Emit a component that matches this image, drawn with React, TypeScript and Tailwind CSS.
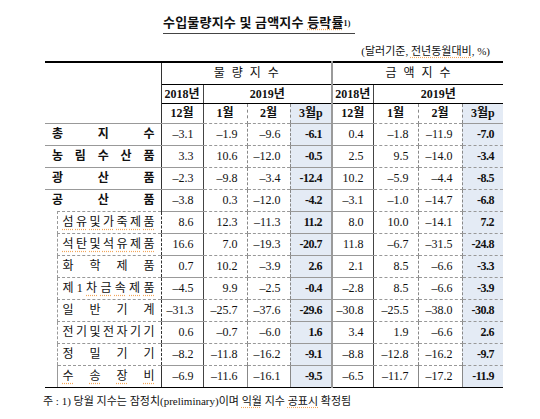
import React from "react";

const FONT = "'Liberation Serif', 'Noto Sans CJK KR', serif";

type Row = { label: string; top: boolean; vals: string[] };

const rows: Row[] = [
  { label: "총지수", top: true, vals: ["-3.1", "-1.9", "-9.6", "-6.1", "0.4", "-1.8", "-11.9", "-7.0"] },
  { label: "농림수산품", top: true, vals: ["3.3", "10.6", "-12.0", "-0.5", "2.5", "9.5", "-14.0", "-3.4"] },
  { label: "광산품", top: true, vals: ["-2.3", "-9.8", "-3.4", "-12.4", "10.2", "-5.9", "-4.4", "-8.5"] },
  { label: "공산품", top: true, vals: ["-3.8", "0.3", "-12.0", "-4.2", "-3.1", "-1.0", "-14.7", "-6.8"] },
  { label: "섬유및가죽제품", top: false, vals: ["8.6", "12.3", "-11.3", "11.2", "8.0", "10.0", "-14.1", "7.2"] },
  { label: "석탄및석유제품", top: false, vals: ["16.6", "7.0", "-19.3", "-20.7", "11.8", "-6.7", "-31.5", "-24.8"] },
  { label: "화학제품", top: false, vals: ["0.7", "10.2", "-3.9", "2.6", "2.1", "8.5", "-6.6", "-3.3"] },
  { label: "제1차금속제품", top: false, vals: ["-4.5", "9.9", "-2.5", "-0.4", "-2.8", "8.5", "-6.6", "-3.9"] },
  { label: "일반기계", top: false, vals: ["-31.3", "-25.7", "-37.6", "-29.6", "-30.8", "-25.5", "-38.0", "-30.8"] },
  { label: "전기및전자기기", top: false, vals: ["0.6", "-0.7", "-6.0", "1.6", "3.4", "1.9", "-6.6", "2.6"] },
  { label: "정밀기기", top: false, vals: ["-8.2", "-11.8", "-16.2", "-9.1", "-8.8", "-12.8", "-16.2", "-9.7"] },
  { label: "수송장비", top: false, vals: ["-6.9", "-11.6", "-16.1", "-9.5", "-6.5", "-11.7", "-17.2", "-11.9"] },
];

const squiggle = new Set(["섬유및가죽제품", "석탄및석유제품", "수송장비"]);

function Spread({ text, bold, under }: { text: string; bold: boolean; under?: boolean }) {
  const chars = Array.from(text);
  return (
    <div
      className={`flex justify-between items-center ${bold ? "font-bold" : "font-normal"} ${
        under ? "underline decoration-dotted decoration-[#f2a65a] underline-offset-[3px]" : ""
      }`}
    >
      {chars.map((c, i) => (
        <span key={i}>{c}</span>
      ))}
    </div>
  );
}

const vr = [
  "border-r border-r-[#444] border-solid",
  "border-r border-r-[#888] border-dashed",
  "border-r border-r-[#888] border-dashed",
  "border-r-[2px] border-r-[#9a9a9a] border-solid",
  "border-r border-r-[#444] border-solid",
  "border-r border-r-[#888] border-dashed",
  "border-r border-r-[#888] border-dashed",
  "",
];

export default function App() {
  return (
    <div
      className="w-[540px] h-[419px] bg-white text-[#111] overflow-hidden"
      style={{ fontFamily: FONT }}
    >
      <div className="pt-[10px] pl-[163px]">
        <span className="inline-block border-b border-[#444] pb-[2px] pr-[4px] text-[13px] leading-[17px] font-bold tracking-[0.2px]">
          수입물량지수 및 금액지수{" "}
          <span className="underline decoration-dotted decoration-[#f2a65a] underline-offset-[2px]">등락률</span>
          <sup className="text-[8px] font-bold relative -top-[1px]">1)</sup>
        </span>
      </div>
      <div className="mt-[10px] h-[14px] flex justify-end pr-[50px] text-[11px] leading-[14px]">
        <span>
          (달러기준,{" "}
          <span className="underline decoration-dotted decoration-[#f2a65a] underline-offset-[2px]">전년동월대비</span>, %)
        </span>
      </div>
      <table className="ml-[45px] mt-[3px] w-[458px] table-fixed border-collapse text-[12px]">
        <colgroup>
          <col className="w-[12px]" />
          <col className="w-[104px]" />
          <col className="w-[42px]" />
          <col className="w-[44px]" />
          <col className="w-[43px]" />
          <col className="w-[42px]" />
          <col className="w-[41px]" />
          <col className="w-[45px]" />
          <col className="w-[44px]" />
          <col className="w-[41px]" />
        </colgroup>
        <thead>
          <tr className="h-[22px]">
            <th
              colSpan={2}
              rowSpan={3}
              className="border-t-[2px] border-t-black border-r border-r-[#333] border-b border-b-[#999]"
            ></th>
            <th
              colSpan={4}
              className="border-t-[2px] border-t-black border-b border-b-black border-r-[2px] border-r-[#9a9a9a] font-normal text-[12px] tracking-[7px] pl-[7px]"
            >
              물량지수
            </th>
            <th
              colSpan={4}
              className="border-t-[2px] border-t-black border-b border-b-black font-normal text-[12px] tracking-[7px] pl-[7px]"
            >
              금액지수
            </th>
          </tr>
          <tr className="h-[19px] text-[12px]">
            <th className="border-b border-b-black border-r border-r-[#444] font-bold">2018년</th>
            <th colSpan={3} className="border-b border-b-black border-r-[2px] border-r-[#9a9a9a] font-bold">
              2019년
            </th>
            <th className="border-b border-b-black border-r border-r-[#444] font-bold">2018년</th>
            <th colSpan={3} className="border-b border-b-black font-bold">
              2019년
            </th>
          </tr>
          <tr className="h-[20px]">
            {["12월", "1월", "2월", "3월p", "12월", "1월", "2월", "3월p"].map((t, i) => (
              <th
                key={i}
                className={`border-b border-b-[#999] font-bold ${vr[i]} ${
                  i === 3 || i === 7 ? "bg-[#e4ebf5]" : ""
                }`}
              >
                {t}
              </th>
            ))}
          </tr>
        </thead>
        <tbody>
          {rows.map((r, ri) => {
            const last = ri === rows.length - 1;
            const bottom = last ? "border-b-[1.5px] border-b-black border-solid" : "border-b border-b-[#999] border-dashed";
            return (
              <tr key={ri} className="h-[22px]">
                {r.top ? (
                  <td
                    colSpan={2}
                    className={`${ri === 3 ? "" : bottom} border-r border-r-[#333] border-solid pl-[7px] pr-[6px]`}
                  >
                    <Spread text={r.label} bold />
                  </td>
                ) : (
                  <>
                    {ri === 4 && <td rowSpan={8} className="border-b-[1.5px] border-b-black border-solid"></td>}
                    <td
                      className={`${bottom} ${
                        ri === 4 ? "border-t border-t-[#999] border-dashed" : ""
                      } border-l border-l-[#999] border-dashed border-r border-r-[#333] pl-[5px] pr-[6px]`}
                    >
                      {r.label === "제1차금속제품" ? (
                        <div className="flex justify-between items-center">
                          <span>제</span>
                          <span>1</span>
                          {Array.from("차금속제품").map((c, i) => (
                            <span
                              key={i}
                              className="underline decoration-dotted decoration-[#f2a65a] underline-offset-[3px]"
                            >
                              {c}
                            </span>
                          ))}
                        </div>
                      ) : (
                        <Spread text={r.label} bold={false} under={squiggle.has(r.label)} />
                      )}
                    </td>
                  </>
                )}
                {r.vals.map((v, i) => {
                  const hl = i === 3 || i === 7;
                  const txt = hl ? v : v.replace("-", "\u2013");
                  return (
                    <td
                      key={i}
                      className={`${bottom} ${vr[i]} text-right pr-[9px] ${
                        hl ? "bg-[#e4ebf5] font-bold tracking-[-0.5px]" : ""
                      }`}
                    >
                      {txt}
                    </td>
                  );
                })}
              </tr>
            );
          })}
        </tbody>
      </table>
      <div className="pl-[43px] mt-[6px] text-[11px] leading-[14px]">
        주 : 1) 당월 지수는 잠정치(preliminary)이며{" "}
        <span className="underline decoration-dotted decoration-[#f2a65a] underline-offset-[2px]">익월</span> 지수{" "}
        <span className="underline decoration-dotted decoration-[#f2a65a] underline-offset-[2px]">공표시</span> 확정됨
      </div>
    </div>
  );
}
